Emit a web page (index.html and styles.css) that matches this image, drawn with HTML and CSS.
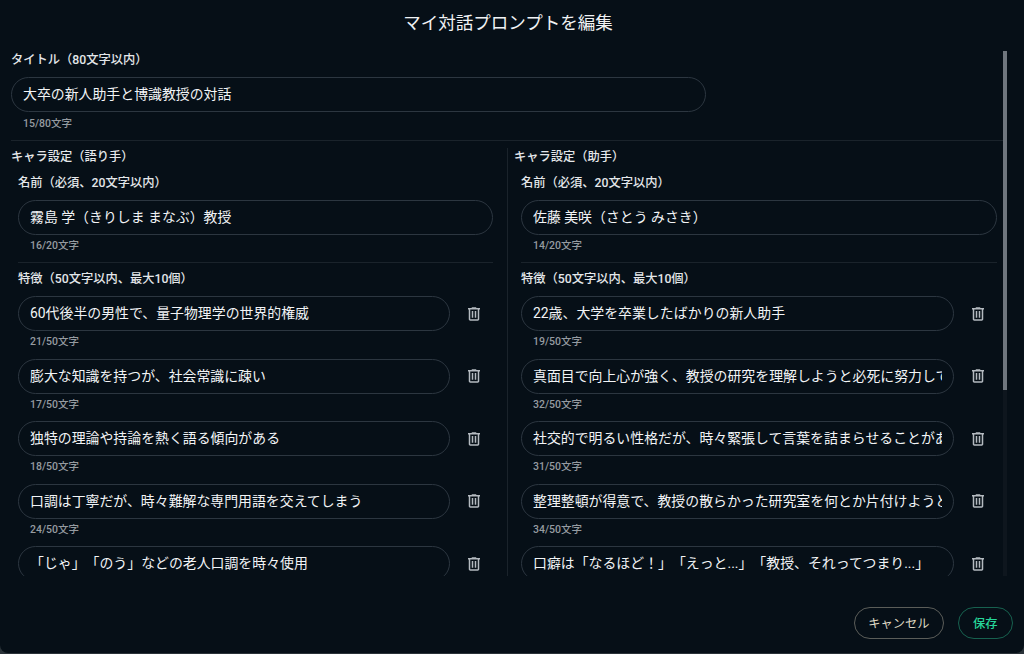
FILE: index.html
```html
<!DOCTYPE html>
<html lang="ja">
<head>
<meta charset="utf-8">
<title>マイ対話プロンプトを編集</title>
<link rel="stylesheet" href="styles.css">
</head>
<body>
<svg class="defs" width="0" height="0" aria-hidden="true"><symbol id="trash" viewBox="0 0 24 24"><path d="M7 21q-.825 0-1.412-.587Q5 19.825 5 19V6H4V4h5V3h6v1h5v2h-1v13q0 .825-.587 1.413Q17.825 21 17 21H7ZM17 6H7v13h10V6ZM9 17h2V8H9v9Zm4 0h2V8h-2v9Z"/></symbol></svg>
<div class="dialog">
  <header class="dialog-head"><h2>マイ対話プロンプトを編集</h2></header>
  <main class="scroll">
    <div class="scroll-body">
      <label class="label">タイトル（80文字以内）</label>
      <div class="field title-field"><div class="field-text">大卒の新人助手と博識教授の対話</div></div>
      <div class="count count-title">15/80文字</div>
      <hr class="rule rule-top">
      <div class="cols">
        <section class="col col-left">
          <h3 class="col-head">キャラ設定（語り手）</h3>
          <div class="col-inner">
            <label class="label label-name">名前（必須、20文字以内）</label>
            <div class="field"><div class="field-text">霧島 学（きりしま まなぶ）教授</div></div>
            <div class="count">16/20文字</div>
            <hr class="rule rule-inner">
            <label class="label label-traits">特徴（50文字以内、最大10個）</label>
            <div class="trait"><div class="trait-row"><div class="field"><div class="field-text">60代後半の男性で、量子物理学の世界的権威</div></div><button class="icon-btn"><svg class="icon"><use href="#trash"/></svg></button></div><div class="count">21/50文字</div></div>
            <div class="trait"><div class="trait-row"><div class="field"><div class="field-text">膨大な知識を持つが、社会常識に疎い</div></div><button class="icon-btn"><svg class="icon"><use href="#trash"/></svg></button></div><div class="count">17/50文字</div></div>
            <div class="trait"><div class="trait-row"><div class="field"><div class="field-text">独特の理論や持論を熱く語る傾向がある</div></div><button class="icon-btn"><svg class="icon"><use href="#trash"/></svg></button></div><div class="count">18/50文字</div></div>
            <div class="trait"><div class="trait-row"><div class="field"><div class="field-text">口調は丁寧だが、時々難解な専門用語を交えてしまう</div></div><button class="icon-btn"><svg class="icon"><use href="#trash"/></svg></button></div><div class="count">24/50文字</div></div>
            <div class="trait"><div class="trait-row"><div class="field"><div class="field-text">「じゃ」「のう」などの老人口調を時々使用</div></div><button class="icon-btn"><svg class="icon"><use href="#trash"/></svg></button></div></div>
          </div>
        </section>
        <section class="col col-right">
          <h3 class="col-head">キャラ設定（助手）</h3>
          <div class="col-inner">
            <label class="label label-name">名前（必須、20文字以内）</label>
            <div class="field"><div class="field-text">佐藤 美咲（さとう みさき）</div></div>
            <div class="count">14/20文字</div>
            <hr class="rule rule-inner">
            <label class="label label-traits">特徴（50文字以内、最大10個）</label>
            <div class="trait"><div class="trait-row"><div class="field"><div class="field-text">22歳、大学を卒業したばかりの新人助手</div></div><button class="icon-btn"><svg class="icon"><use href="#trash"/></svg></button></div><div class="count">19/50文字</div></div>
            <div class="trait"><div class="trait-row"><div class="field"><div class="field-text">真面目で向上心が強く、教授の研究を理解しようと必死に努力している</div></div><button class="icon-btn"><svg class="icon"><use href="#trash"/></svg></button></div><div class="count">32/50文字</div></div>
            <div class="trait"><div class="trait-row"><div class="field"><div class="field-text">社交的で明るい性格だが、時々緊張して言葉を詰まらせることがある</div></div><button class="icon-btn"><svg class="icon"><use href="#trash"/></svg></button></div><div class="count">31/50文字</div></div>
            <div class="trait"><div class="trait-row"><div class="field"><div class="field-text">整理整頓が得意で、教授の散らかった研究室を何とか片付けようとしている</div></div><button class="icon-btn"><svg class="icon"><use href="#trash"/></svg></button></div><div class="count">34/50文字</div></div>
            <div class="trait"><div class="trait-row"><div class="field"><div class="field-text">口癖は「なるほど！」「えっと...」「教授、それってつまり...」</div></div><button class="icon-btn"><svg class="icon"><use href="#trash"/></svg></button></div></div>
          </div>
        </section>
      </div>
    </div>
    <div class="scroll-track"><div class="scroll-thumb"></div></div>
  </main>
  <footer class="dialog-foot">
    <button class="btn btn-cancel">キャンセル</button>
    <button class="btn btn-save">保存</button>
  </footer>
</div>
</body>
</html>
```
FILE: styles.css
```css
* { box-sizing: border-box; }
html, body { margin: 0; height: 100%; }
body {
  background: #2a3238;
  color: #f2f4f6;
  font-family: Roboto, "Noto Sans CJK JP", "Noto Sans", sans-serif;
  text-spacing-trim: space-all;
  overflow: hidden;
}
.defs { position: absolute; }
.dialog {
  display: flex;
  flex-direction: column;
  height: 653px;
  background: #060f17;
  border-radius: 0 0 8px 8px;
}
.dialog-head {
  height: 51px;
  flex: none;
  padding: 11px 8px 0 0;
  text-align: center;
}
.dialog-head h2 {
  margin: 0;
  font-size: 17.5px;
  line-height: 24px;
  font-weight: 400;
  color: #f0f2f4;
}
.scroll {
  position: relative;
  flex: none;
  height: 525px;
  overflow: hidden;
}
.scroll-body { padding: 0 21px 0 11px; }
.scroll-track {
  position: absolute;
  top: 0;
  bottom: 0;
  left: 1003px;
  width: 4px;
  background: #0e161e;
}
.scroll-thumb {
  height: 339px;
  background: #6f767e;
}
.label {
  display: block;
  font-size: 12.25px;
  line-height: 18px;
  font-weight: 500;
  color: #e4e7ea;
  margin-bottom: 8px;
}
.field {
  display: flex;
  align-items: center;
  flex: 1;
  min-width: 0;
  height: 35px;
  padding: 0 11px;
  border: 1px solid #2c3640;
  border-radius: 18px;
  font-size: 13.9px;
}
.field-text {
  flex: 1;
  min-width: 0;
  overflow: hidden;
  white-space: nowrap;
  line-height: 20px;
  margin-top: -1px;
}
.title-field { flex: none; width: 695px; }
.count {
  margin-top: 3px;
  margin-bottom: -1px;
  padding-left: 12px;
  font-size: 10.5px;
  line-height: 16px;
  font-weight: 500;
  color: #959ba0;
}
.count-title { margin-top: 4px; margin-bottom: -2px; }
.rule { border: 0; height: 1px; margin: 0; background: #1a232b; }
.rule-top { margin-top: 10px; }
.cols {
  display: grid;
  grid-template-columns: 496px minmax(0, 1fr);
  margin-top: 7px;
}
.col-left { padding-right: 14px; }
.col-right { border-left: 1px solid #1a232b; padding: 0 6.5px 0 6px; }
.col-head {
  margin: 0;
  padding-top: 1px;
  font-size: 12.25px;
  line-height: 16px;
  font-weight: 500;
  color: #e4e7ea;
}
.col-inner { padding-left: 7px; }
.label-name { margin: 9px 0 8px; }
.rule-inner { margin-top: 9px; }
.label-traits { margin: 7px 0 8px; }
.trait { margin-bottom: 9.5px; }
.trait-row { display: flex; align-items: center; }
.icon-btn {
  flex: none;
  display: flex;
  align-items: center;
  justify-content: center;
  width: 32px;
  height: 32px;
  margin: 0 3px 0 8px;
  padding: 0;
  border: 0;
  background: none;
}
.icon { width: 18px; height: 18px; fill: #b4bac0; }
.dialog-foot {
  flex: 1;
  display: flex;
  justify-content: flex-end;
  align-items: flex-start;
  gap: 14px;
  padding: 31px 11px 0 0;
}
.btn {
  height: 32px;
  border-radius: 16px;
  background: none;
  font-family: inherit;
  font-size: 12.25px;
  font-weight: 400;
  border: 1px solid;
}
.btn-cancel { padding: 0 13px; color: #ded7c2; border-color: #5b5d59; }
.btn-save { padding: 0 14.5px; color: #26d69a; font-weight: 500; border-color: #17614f; }
```
